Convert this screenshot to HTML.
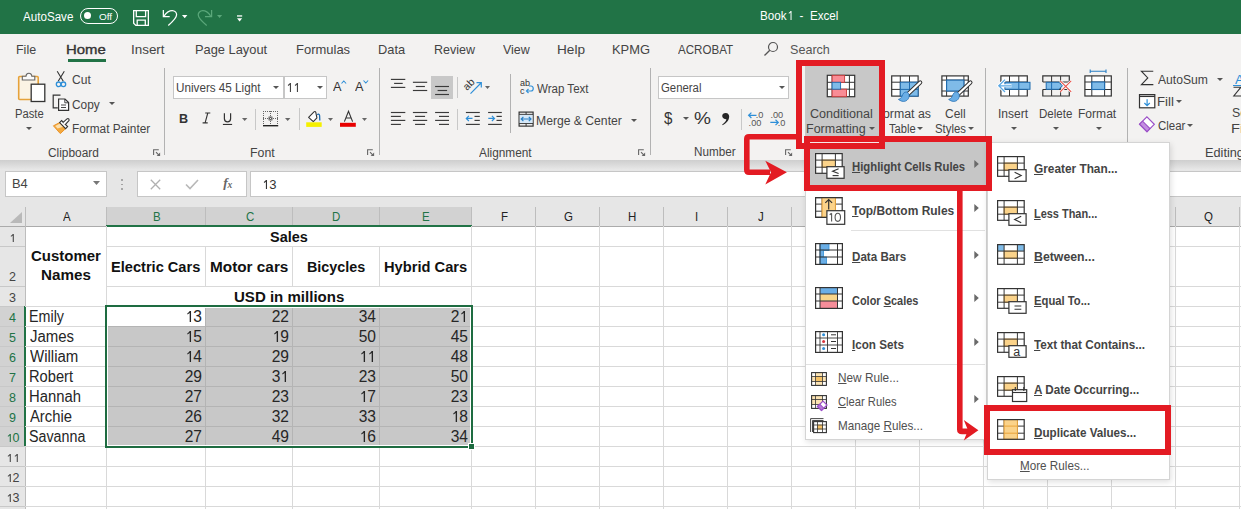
<!DOCTYPE html><html><head><meta charset="utf-8"><style>
html,body{margin:0;padding:0;}
body{width:1241px;height:509px;overflow:hidden;position:relative;background:#fff;font-family:"Liberation Sans",sans-serif;}
.t{position:absolute;white-space:nowrap;line-height:1;}
.r{position:absolute;}
.s{position:absolute;overflow:visible;}
u{text-decoration:underline;text-underline-offset:1px;}
</style></head><body>
<div class="r" style="left:0px;top:0px;width:1241px;height:34px;background:#217346;"></div>
<div class="t" style="left:23.25px;top:11.19px;font-size:12.5px;font-weight:normal;color:#fff;transform-origin:0 0;transform:scaleX(0.9291);">AutoSave</div>
<div class="r" style="left:80px;top:8px;width:38px;height:15.7px;box-sizing:border-box;border:1.3px solid #fff;border-radius:9px;"></div>
<div class="r" style="left:84.4px;top:12.4px;width:7px;height:7px;background:#fff;border-radius:50%;"></div>
<div class="t" style="left:98.74px;top:11.71px;font-size:9.8px;font-weight:normal;color:#fff;transform-origin:0 0;transform:scaleX(1.0201);">Off</div>
<svg class="s" style="left:132px;top:9px;" width="19" height="18" viewBox="0 0 19 18"><path d="M1.65 1.65 H16.35 V16.35 H3.8 L1.65 14.2 Z" fill="none" stroke="#fff" stroke-width="1.3"/><path d="M4.3 1.65 V7.6 H13.6 V1.65" fill="none" stroke="#fff" stroke-width="1.3"/><path d="M5.2 16.35 V11.1 H13.3 V16.35" fill="none" stroke="#fff" stroke-width="1.3"/></svg>
<svg class="s" style="left:162px;top:9px;" width="17" height="18" viewBox="0 0 17 18"><path d="M1.35 0.9 V7.5 H7.7" fill="none" stroke="#fff" stroke-width="1.25"/><path d="M2.2 6.8 C4.5 3.5 7.5 1.6 10.2 1.6 C13 1.6 14.6 3.8 14.6 5.8 C14.6 9 11.5 12 6.3 16.4" fill="none" stroke="#fff" stroke-width="1.25"/></svg>
<svg class="s" style="left:181.8px;top:14.8px;" width="5.4" height="3.2" viewBox="0 0 5.4 3.2"><path d="M0 0 H5.4 L2.7 3.2 Z" fill="#fff"/></svg>
<svg class="s" style="left:196px;top:9px;" width="17" height="18" viewBox="0 0 17 18"><path d="M15.6 0.9 V7.5 H9" fill="none" stroke="#5aa77a" stroke-width="1.25"/><path d="M14.6 6.8 C12.3 3.5 9.5 1.6 6.8 1.6 C4 1.6 2.2 3.8 2.2 5.8 C2.2 9 5.3 12 10.7 16.4" fill="none" stroke="#5aa77a" stroke-width="1.25"/></svg>
<svg class="s" style="left:216.8px;top:15px;" width="5.2" height="3" viewBox="0 0 5.2 3"><path d="M0 0 H5.2 L2.6 3 Z" fill="#5aa77a"/></svg>
<svg class="s" style="left:237px;top:14.5px;" width="5.2" height="7" viewBox="0 0 5.2 7"><rect x="0" y="0.3" width="5.2" height="1.3" fill="#fff"/><path d="M0 3.3 H5.2 L2.6 6.5 Z" fill="#fff"/></svg>
<div class="t" style="left:760.37px;top:9.69px;font-size:12.5px;font-weight:normal;color:#fff;transform-origin:0 0;transform:scaleX(0.9325);">Book<svg width="6.95" height="8.95" viewBox="0 0 556 716" style="vertical-align:baseline;display:inline-block" preserveAspectRatio="none"><path d="M300 0 H386 V716 H300 V130 C260 170 210 200 150 222 V140 C220 110 270 60 300 0 Z" fill="#fff"/></svg>&nbsp; -&nbsp; Excel</div>
<div class="r" style="left:0px;top:34px;width:1241px;height:32px;background:#f3f2f1;"></div>
<div class="t" style="left:15.98px;top:44.25px;font-size:12.8px;font-weight:normal;color:#444;transform-origin:0 0;transform:scaleX(0.9737);">File</div>
<div class="t" style="left:66.48px;top:44.25px;font-size:12.8px;font-weight:normal;color:#333;transform-origin:0 0;transform:scaleX(1.1644);-webkit-text-stroke:0.35px #333;">Home</div>
<div class="t" style="left:131.34px;top:44.25px;font-size:12.8px;font-weight:normal;color:#444;transform-origin:0 0;transform:scaleX(1.0489);">Insert</div>
<div class="t" style="left:194.95px;top:44.25px;font-size:12.8px;font-weight:normal;color:#444;transform-origin:0 0;transform:scaleX(1.0035);">Page Layout</div>
<div class="t" style="left:295.93px;top:44.25px;font-size:12.8px;font-weight:normal;color:#444;transform-origin:0 0;transform:scaleX(1.0145);">Formulas</div>
<div class="t" style="left:377.95px;top:44.25px;font-size:12.8px;font-weight:normal;color:#444;transform-origin:0 0;transform:scaleX(1.0019);">Data</div>
<div class="t" style="left:434.17px;top:44.25px;font-size:12.8px;font-weight:normal;color:#444;transform-origin:0 0;transform:scaleX(0.9768);">Review</div>
<div class="t" style="left:502.95px;top:44.25px;font-size:12.8px;font-weight:normal;color:#444;transform-origin:0 0;transform:scaleX(0.9727);">View</div>
<div class="t" style="left:557.18px;top:44.25px;font-size:12.8px;font-weight:normal;color:#444;transform-origin:0 0;transform:scaleX(1.0626);">Help</div>
<div class="t" style="left:612.04px;top:44.25px;font-size:12.8px;font-weight:normal;color:#444;transform-origin:0 0;transform:scaleX(1.0084);">KPMG</div>
<div class="t" style="left:677.95px;top:44.25px;font-size:12.8px;font-weight:normal;color:#444;transform-origin:0 0;transform:scaleX(0.9043);">ACROBAT</div>
<div class="r" style="left:68px;top:59px;width:38px;height:3px;background:#217346;"></div>
<svg class="s" style="left:763px;top:41px;" width="16" height="16" viewBox="0 0 16 16"><circle cx="10" cy="6" r="4.5" fill="none" stroke="#555" stroke-width="1.2"/><path d="M6.8 9.2 L1.5 14.5" stroke="#555" stroke-width="1.3"/></svg>
<div class="t" style="left:789.71px;top:44.25px;font-size:12.8px;font-weight:normal;color:#555;transform-origin:0 0;transform:scaleX(0.9834);">Search</div>
<div class="r" style="left:0px;top:66px;width:1241px;height:94px;background:#f3f2f1;"></div>
<div class="r" style="left:0px;top:160px;width:1241px;height:8px;background:linear-gradient(#d6d6d6,#e6e6e6);"></div>
<svg class="s" style="left:17px;top:71px;" width="30" height="32" viewBox="0 0 30 32"><rect x="1.7" y="5.5" width="19.5" height="23" rx="1" fill="#fbf3e4" stroke="#e6a23a" stroke-width="1.6"/><path d="M5.3 9 V5.3 H9 C9 1.2 14.8 1.2 14.8 5.3 H17.8 V9 Z" fill="#fafafa" stroke="#666" stroke-width="1.1"/><rect x="14.2" y="13.2" width="13.6" height="17.3" fill="#fff" stroke="#333" stroke-width="1.3"/></svg>
<div class="t" style="left:14.86px;top:107.74px;font-size:12px;font-weight:normal;color:#444;transform-origin:0 0;transform:scaleX(0.9365);">Paste</div>
<svg class="s" style="left:25.7px;top:127.0px;" width="6" height="3" viewBox="0 0 6 3"><path d="M0 0 H6 L3.0 3 Z" fill="#555"/></svg>
<svg class="s" style="left:54px;top:70px;" width="14" height="18" viewBox="0 0 14 18"><path d="M3.2 1.2 L9.3 11.2 M10.3 1.2 L4.2 11.2" stroke="#333" stroke-width="1.1" fill="none"/><circle cx="4.6" cy="14.3" r="2.3" fill="none" stroke="#2e8fd8" stroke-width="1.3"/><circle cx="9.4" cy="14.3" r="2.3" fill="none" stroke="#2e8fd8" stroke-width="1.3"/></svg>
<div class="t" style="left:72.10px;top:74.44px;font-size:12px;font-weight:normal;color:#444;transform-origin:0 0;transform:scaleX(1.0056);">Cut</div>
<svg class="s" style="left:52px;top:94px;" width="18" height="18" viewBox="0 0 18 18"><path d="M8.5 1.2 H1.2 V13.8 H5.8" fill="none" stroke="#333" stroke-width="1.2"/><path d="M6.6 5 H13 L16.6 8.6 V16.4 H6.6 Z" fill="#fff" stroke="#333" stroke-width="1.2"/><path d="M12.8 5 V8.8 H16.6" fill="none" stroke="#333" stroke-width="0.9"/><path d="M9 11 H14 M9 13.5 H14" stroke="#333" stroke-width="0.9"/></svg>
<div class="t" style="left:72.11px;top:98.94px;font-size:12px;font-weight:normal;color:#444;transform-origin:0 0;transform:scaleX(0.9909);">Copy</div>
<svg class="s" style="left:109.0px;top:101.7px;" width="6" height="3" viewBox="0 0 6 3"><path d="M0 0 H6 L3.0 3 Z" fill="#555"/></svg>
<svg class="s" style="left:52px;top:118px;" width="18" height="17" viewBox="0 0 18 17"><path d="M1.4 7.8 L8.2 4.3 L14 10.2 L8.3 15.6 Z" fill="#f4a93e" stroke="#e88d1f" stroke-width="0.9"/><path d="M3.2 8 L8 5.6 L11.2 8.8 L5.5 10.5 Z" fill="#fde0ad"/><path d="M7.6 4.6 L9.6 2.6 L15.6 8.6 L13.6 10.6 Z" fill="#fff" stroke="#333" stroke-width="1.1"/><path d="M10.8 4.6 L15 0.9 Q16 0.2 16.8 1 Q17.5 1.8 16.9 2.7 L13 6.9" fill="#fff" stroke="#333" stroke-width="1.1"/></svg>
<div class="t" style="left:71.71px;top:122.54px;font-size:12px;font-weight:normal;color:#444;transform-origin:0 0;transform:scaleX(0.9853);">Format Painter</div>
<div class="t" style="left:48.11px;top:146.54px;font-size:12px;font-weight:normal;color:#444;transform-origin:0 0;transform:scaleX(0.9900);">Clipboard</div>
<svg class="s" style="left:152.5px;top:148.6px;" width="9" height="9" viewBox="0 0 9 9"><path d="M0.6 5.9 V0.75 H5.8" fill="none" stroke="#666" stroke-width="1.1"/><path d="M3 3.2 L6.4 6.6" stroke="#666" stroke-width="1.1"/><path d="M7.1 3.4 V6.9 H3.6 Z" fill="#666"/></svg>
<div class="r" style="left:164px;top:68px;width:1px;height:87px;background:#b2b2b2;"></div>
<div class="r" style="left:173px;top:76px;width:111px;height:23px;box-sizing:border-box;border:1px solid #c6c6c6;background:#fff;"></div>
<div class="r" style="left:284px;top:76px;width:43px;height:23px;box-sizing:border-box;border:1px solid #c6c6c6;background:#fff;"></div>
<div class="t" style="left:175.52px;top:82.24px;font-size:12px;font-weight:normal;color:#444;transform-origin:0 0;transform:scaleX(0.9738);">Univers 45 Light</div>
<svg class="s" style="left:273.4px;top:86.0px;" width="6" height="3" viewBox="0 0 6 3"><path d="M0 0 H6 L3.0 3 Z" fill="#555"/></svg>
<div class="t" style="left:286px;top:81.3px;font-size:13px;color:#444;"><svg width="7.23" height="9.31" viewBox="0 0 556 716" style="vertical-align:baseline;display:inline-block" preserveAspectRatio="none"><path d="M300 0 H386 V716 H300 V130 C260 170 210 200 150 222 V140 C220 110 270 60 300 0 Z" fill="#444"/></svg><svg width="7.23" height="9.31" viewBox="0 0 556 716" style="vertical-align:baseline;display:inline-block" preserveAspectRatio="none"><path d="M300 0 H386 V716 H300 V130 C260 170 210 200 150 222 V140 C220 110 270 60 300 0 Z" fill="#444"/></svg></div>
<svg class="s" style="left:316.6px;top:86.0px;" width="6" height="3" viewBox="0 0 6 3"><path d="M0 0 H6 L3.0 3 Z" fill="#555"/></svg>
<div class="t" style="left:333.35px;top:80.46px;font-size:13.6px;font-weight:normal;color:#333;transform-origin:0 0;transform:scaleX(0.9333);">A</div>
<svg class="s" style="left:340.8px;top:79.6px;" width="6" height="4" viewBox="0 0 6 4"><path d="M0.5 3.5 L2.8 1 L5.1 3.5" fill="none" stroke="#2e8fd8" stroke-width="1.1"/></svg>
<div class="t" style="left:355.05px;top:80.46px;font-size:13.6px;font-weight:normal;color:#333;transform-origin:0 0;transform:scaleX(0.9333);">A</div>
<svg class="s" style="left:362.5px;top:79.8px;" width="6" height="4" viewBox="0 0 6 4"><path d="M0.5 0.5 L2.8 3 L5.1 0.5" fill="none" stroke="#2e8fd8" stroke-width="1.1"/></svg>
<div class="t" style="left:179.46px;top:111.96px;font-size:13.5px;font-weight:bold;color:#333;transform-origin:0 0;transform:scaleX(0.9333);">B</div>
<svg class="s" style="left:201px;top:112px;" width="10" height="12" viewBox="0 0 10 12"><path d="M4.2 1 H9.3 M1.6 10.9 H6.7 M6.8 1 L4.1 10.9" fill="none" stroke="#333" stroke-width="1.1"/></svg>
<svg class="s" style="left:222px;top:112px;" width="11" height="14" viewBox="0 0 11 14"><path d="M2.4 1.2 V6.8 C2.4 10.9 8.6 10.9 8.6 6.8 V1.2" fill="none" stroke="#333" stroke-width="1.2"/><rect x="0.9" y="11.9" width="9.2" height="1.1" fill="#333"/></svg>
<svg class="s" style="left:241.70000000000002px;top:118.0px;" width="5.4" height="3" viewBox="0 0 5.4 3"><path d="M0 0 H5.4 L2.7 3 Z" fill="#666"/></svg>
<div class="r" style="left:255.3px;top:109px;width:1px;height:21px;background:#c8c8c8;"></div>
<svg class="s" style="left:263px;top:111px;" width="16" height="16" viewBox="0 0 16 16"><rect x="0" y="0" width="1" height="1" fill="#666"/><rect x="0" y="7" width="1" height="1" fill="#666"/><rect x="0" y="0" width="1" height="1" fill="#666"/><rect x="14" y="0" width="1" height="1" fill="#666"/><rect x="7" y="0" width="1" height="1" fill="#666"/><rect x="2" y="0" width="1" height="1" fill="#666"/><rect x="2" y="7" width="1" height="1" fill="#666"/><rect x="0" y="2" width="1" height="1" fill="#666"/><rect x="14" y="2" width="1" height="1" fill="#666"/><rect x="7" y="2" width="1" height="1" fill="#666"/><rect x="4" y="0" width="1" height="1" fill="#666"/><rect x="4" y="7" width="1" height="1" fill="#666"/><rect x="0" y="4" width="1" height="1" fill="#666"/><rect x="14" y="4" width="1" height="1" fill="#666"/><rect x="7" y="4" width="1" height="1" fill="#666"/><rect x="6" y="0" width="1" height="1" fill="#666"/><rect x="6" y="7" width="1" height="1" fill="#666"/><rect x="0" y="6" width="1" height="1" fill="#666"/><rect x="14" y="6" width="1" height="1" fill="#666"/><rect x="7" y="6" width="1" height="1" fill="#666"/><rect x="8" y="0" width="1" height="1" fill="#666"/><rect x="8" y="7" width="1" height="1" fill="#666"/><rect x="0" y="8" width="1" height="1" fill="#666"/><rect x="14" y="8" width="1" height="1" fill="#666"/><rect x="7" y="8" width="1" height="1" fill="#666"/><rect x="10" y="0" width="1" height="1" fill="#666"/><rect x="10" y="7" width="1" height="1" fill="#666"/><rect x="0" y="10" width="1" height="1" fill="#666"/><rect x="14" y="10" width="1" height="1" fill="#666"/><rect x="7" y="10" width="1" height="1" fill="#666"/><rect x="12" y="0" width="1" height="1" fill="#666"/><rect x="12" y="7" width="1" height="1" fill="#666"/><rect x="0" y="12" width="1" height="1" fill="#666"/><rect x="14" y="12" width="1" height="1" fill="#666"/><rect x="7" y="12" width="1" height="1" fill="#666"/><rect x="14" y="0" width="1" height="1" fill="#666"/><rect x="14" y="7" width="1" height="1" fill="#666"/><rect x="0" y="14" width="1" height="1" fill="#666"/><rect x="14" y="14" width="1" height="1" fill="#666"/><rect x="7" y="14" width="1" height="1" fill="#666"/><rect x="0" y="14" width="15.2" height="1.4" fill="#222"/><rect x="6" y="6" width="3" height="3" fill="none" stroke="#444" stroke-width="0.8"/></svg>
<svg class="s" style="left:284.7px;top:118.0px;" width="5.4" height="3" viewBox="0 0 5.4 3"><path d="M0 0 H5.4 L2.7 3 Z" fill="#666"/></svg>
<div class="r" style="left:298.5px;top:108px;width:1px;height:22px;background:#c8c8c8;"></div>
<svg class="s" style="left:0;top:0" width="400" height="140" viewBox="0 0 400 140"><path d="M308.6 117.3 L314 111.9 C314.6 111.3 315.6 111.4 315.8 112.3 L316.9 117.9 L313.3 121.7 Z" fill="#fff" stroke="#333" stroke-width="1.1" stroke-linejoin="round"/><path d="M317.3 114.8 C318.2 113.6 319.4 114 319.6 115.5 L319.8 120.5" fill="none" stroke="#1f6cb0" stroke-width="1.3"/><rect x="306.2" y="122.3" width="15.5" height="4.6" fill="#f5f000"/><path d="M344.4 121.6 L348.5 111.3 L352.6 121.6 M345.9 118 H351.1" fill="none" stroke="#333" stroke-width="1.1"/><rect x="340" y="122.8" width="15.8" height="4" fill="#e80000"/></svg>
<svg class="s" style="left:328.1px;top:117.9px;" width="5" height="3" viewBox="0 0 5 3"><path d="M0 0 H5 L2.5 3 Z" fill="#666"/></svg>
<svg class="s" style="left:362.1px;top:117.9px;" width="5" height="3" viewBox="0 0 5 3"><path d="M0 0 H5 L2.5 3 Z" fill="#666"/></svg>
<div class="t" style="left:250.37px;top:146.54px;font-size:12px;font-weight:normal;color:#444;transform-origin:0 0;transform:scaleX(1.0283);">Font</div>
<svg class="s" style="left:366.8px;top:148.6px;" width="9" height="9" viewBox="0 0 9 9"><path d="M0.6 5.9 V0.75 H5.8" fill="none" stroke="#666" stroke-width="1.1"/><path d="M3 3.2 L6.4 6.6" stroke="#666" stroke-width="1.1"/><path d="M7.1 3.4 V6.9 H3.6 Z" fill="#666"/></svg>
<div class="r" style="left:378.5px;top:68px;width:1px;height:87px;background:#b2b2b2;"></div>
<div class="r" style="left:431.2px;top:76px;width:21.8px;height:22.8px;background:#c8c8c8;"></div>
<svg class="s" style="left:0;top:0" width="1241" height="160" viewBox="0 0 1241 160"><rect x="390.90" y="78.83" width="14.40" height="1.15" fill="#3a3a3a"/><rect x="394.10" y="82.83" width="8.60" height="1.15" fill="#3a3a3a"/><rect x="390.90" y="86.83" width="14.40" height="1.15" fill="#3a3a3a"/><rect x="412.90" y="81.72" width="14.30" height="1.15" fill="#3a3a3a"/><rect x="415.80" y="85.92" width="9.10" height="1.15" fill="#3a3a3a"/><rect x="412.90" y="89.92" width="14.30" height="1.15" fill="#3a3a3a"/><rect x="435.10" y="85.92" width="13.90" height="1.15" fill="#3a3a3a"/><rect x="437.60" y="89.92" width="9.50" height="1.15" fill="#3a3a3a"/><rect x="435.10" y="93.92" width="13.90" height="1.15" fill="#3a3a3a"/><rect x="390.90" y="111.92" width="14.40" height="1.15" fill="#3a3a3a"/><rect x="390.90" y="115.83" width="10.00" height="1.15" fill="#3a3a3a"/><rect x="390.90" y="119.83" width="14.40" height="1.15" fill="#3a3a3a"/><rect x="390.90" y="123.83" width="10.00" height="1.15" fill="#3a3a3a"/><rect x="412.90" y="111.92" width="14.30" height="1.15" fill="#3a3a3a"/><rect x="415.05" y="115.83" width="10.00" height="1.15" fill="#3a3a3a"/><rect x="412.90" y="119.83" width="14.30" height="1.15" fill="#3a3a3a"/><rect x="415.05" y="123.83" width="10.00" height="1.15" fill="#3a3a3a"/><rect x="435.10" y="111.92" width="13.90" height="1.15" fill="#3a3a3a"/><rect x="439.00" y="115.83" width="10.00" height="1.15" fill="#3a3a3a"/><rect x="435.10" y="119.83" width="13.90" height="1.15" fill="#3a3a3a"/><rect x="439.00" y="123.83" width="10.00" height="1.15" fill="#3a3a3a"/><rect x="465.90" y="111.92" width="13.90" height="1.15" fill="#3a3a3a"/><rect x="474.50" y="115.83" width="5.30" height="1.15" fill="#3a3a3a"/><rect x="474.50" y="119.83" width="5.30" height="1.15" fill="#3a3a3a"/><rect x="465.90" y="123.83" width="13.90" height="1.15" fill="#3a3a3a"/><rect x="488.10" y="111.92" width="13.70" height="1.15" fill="#3a3a3a"/><rect x="496.50" y="115.83" width="5.30" height="1.15" fill="#3a3a3a"/><rect x="496.50" y="119.83" width="5.30" height="1.15" fill="#3a3a3a"/><rect x="488.10" y="123.83" width="13.70" height="1.15" fill="#3a3a3a"/><path d="M472.5 118.4 H466.3 M468.9 115.8 L466.3 118.4 L468.9 121" fill="none" stroke="#2e8fd8" stroke-width="1.2"/><path d="M488.3 118.4 H494.5 M491.9 115.8 L494.5 118.4 L491.9 121" fill="none" stroke="#2e8fd8" stroke-width="1.2"/></svg>
<div class="r" style="left:457px;top:77px;width:1px;height:21px;background:#c8c8c8;"></div>
<div class="r" style="left:457px;top:109px;width:1px;height:21px;background:#c8c8c8;"></div>
<svg class="s" style="left:462px;top:77px;" width="22" height="18" viewBox="0 0 22 18"><text x="0" y="0" font-size="10.5" font-family="Liberation Sans" fill="#333" transform="translate(5 14) rotate(-45)">ab</text><path d="M8.5 16.7 L19 6 M14.5 5.6 H19.3 V10.4" fill="none" stroke="#2e8fd8" stroke-width="1.2"/></svg>
<svg class="s" style="left:484.9px;top:85.9px;" width="5" height="3" viewBox="0 0 5 3"><path d="M0 0 H5 L2.5 3 Z" fill="#666"/></svg>
<div class="r" style="left:510px;top:74px;width:1px;height:59px;background:#b2b2b2;"></div>
<svg class="s" style="left:519px;top:78px;" width="17" height="18" viewBox="0 0 17 18"><text x="1" y="8" font-size="9" font-family="Liberation Sans" fill="#333">ab</text><text x="1" y="16" font-size="9" font-family="Liberation Sans" fill="#333">c</text><path d="M8 13 H12 C15 13 15 8 12 8 H10" fill="none" stroke="#2e8fd8" stroke-width="1.2"/><path d="M9.5 11 L7.5 13 L9.5 15" fill="none" stroke="#2e8fd8" stroke-width="1.2"/></svg>
<div class="t" style="left:537.25px;top:82.54px;font-size:12px;font-weight:normal;color:#444;transform-origin:0 0;transform:scaleX(0.9616);">Wrap Text</div>
<svg class="s" style="left:517.5px;top:110.5px;" width="16" height="16" viewBox="0 0 16 16"><rect x="1.1" y="1.1" width="14" height="14" fill="#fff" stroke="#333" stroke-width="1.2"/><rect x="1.7" y="3.6" width="12.8" height="8.8" fill="#d5e8f8"/><path d="M1.1 3.3 H15.1 M1.1 12.6 H15.1 M8.1 1.1 V3.3 M8.1 12.6 V15.1" stroke="#333" stroke-width="1"/><path d="M3.2 8 H13 M5.4 5.8 L3.2 8 L5.4 10.2 M10.8 5.8 L13 8 L10.8 10.2" fill="none" stroke="#2a7fc4" stroke-width="1.2"/></svg>
<div class="t" style="left:536.29px;top:114.84px;font-size:12px;font-weight:normal;color:#444;transform-origin:0 0;transform:scaleX(1.0132);">Merge &amp; Center</div>
<svg class="s" style="left:631.3px;top:118.5px;" width="6" height="3" viewBox="0 0 6 3"><path d="M0 0 H6 L3.0 3 Z" fill="#555"/></svg>
<div class="t" style="left:479.25px;top:146.54px;font-size:12px;font-weight:normal;color:#444;transform-origin:0 0;transform:scaleX(0.9859);">Alignment</div>
<svg class="s" style="left:637.8px;top:148.6px;" width="9" height="9" viewBox="0 0 9 9"><path d="M0.6 5.9 V0.75 H5.8" fill="none" stroke="#666" stroke-width="1.1"/><path d="M3 3.2 L6.4 6.6" stroke="#666" stroke-width="1.1"/><path d="M7.1 3.4 V6.9 H3.6 Z" fill="#666"/></svg>
<div class="r" style="left:649.5px;top:68px;width:1px;height:87px;background:#b2b2b2;"></div>
<div class="r" style="left:658px;top:76px;width:131px;height:23px;box-sizing:border-box;border:1px solid #c6c6c6;background:#fff;"></div>
<div class="t" style="left:661.13px;top:82.34px;font-size:12px;font-weight:normal;color:#444;transform-origin:0 0;transform:scaleX(0.9467);">General</div>
<svg class="s" style="left:778.5px;top:86.0px;" width="6" height="3" viewBox="0 0 6 3"><path d="M0 0 H6 L3.0 3 Z" fill="#555"/></svg>
<div class="t" style="left:663.86px;top:111.18px;font-size:16px;font-weight:normal;color:#333;transform-origin:0 0;transform:scaleX(0.9412);">$</div>
<svg class="s" style="left:682.6px;top:117.0px;" width="6" height="3" viewBox="0 0 6 3"><path d="M0 0 H6 L3.0 3 Z" fill="#555"/></svg>
<div class="t" style="left:694.35px;top:111.18px;font-size:16px;font-weight:normal;color:#333;transform-origin:0 0;transform:scaleX(1.1908);">%</div>
<svg class="s" style="left:721px;top:112px;" width="9" height="14" viewBox="0 0 9 14"><path d="M4.6 1 C7.2 1 8.3 3 8.2 4.8 C8 8.5 5 11.8 1.6 13.2 L1.2 12.4 C3.5 11 5 9.5 5.4 7.3 C3 7.3 1.2 6 1.2 4.1 C1.2 2.2 2.7 1 4.6 1 Z" fill="#262626"/></svg>
<div class="r" style="left:740.5px;top:109px;width:1px;height:21px;background:#c8c8c8;"></div>
<svg class="s" style="left:0;top:0" width="800" height="160" viewBox="0 0 800 160"><text x="755.8" y="117.6" font-size="9.2" font-family="Liberation Sans" fill="#555">.0</text><text x="748.6" y="125.8" font-size="9.2" font-family="Liberation Sans" fill="#555">.00</text><path d="M756.5 115.3 H748.6 M751.4 112.6 L748.6 115.3 L751.4 118" fill="none" stroke="#2e8fd8" stroke-width="1.2"/><text x="770.4" y="117.6" font-size="9.2" font-family="Liberation Sans" fill="#555">.00</text><text x="777.7" y="125.8" font-size="9.2" font-family="Liberation Sans" fill="#555">.0</text><path d="M770.3 122.4 H778.3 M775.5 119.7 L778.3 122.4 L775.5 125.1" fill="none" stroke="#2e8fd8" stroke-width="1.2"/></svg>
<div class="t" style="left:693.63px;top:146.34px;font-size:12px;font-weight:normal;color:#444;transform-origin:0 0;transform:scaleX(0.9735);">Number</div>
<svg class="s" style="left:784.6px;top:148.6px;" width="9" height="9" viewBox="0 0 9 9"><path d="M0.6 5.9 V0.75 H5.8" fill="none" stroke="#666" stroke-width="1.1"/><path d="M3 3.2 L6.4 6.6" stroke="#666" stroke-width="1.1"/><path d="M7.1 3.4 V6.9 H3.6 Z" fill="#666"/></svg>
<div class="r" style="left:805px;top:66px;width:74px;height:70px;background:#c8c8c8;"></div>
<svg class="s" style="left:826px;top:74px;" width="30" height="24" viewBox="0 0 30 24"><rect x="1.3" y="1.3" width="27.4" height="21.4" fill="#fff" stroke="#333" stroke-width="1.2"/><path d="M6.1 1.3 V22.7 M23.4 1.3 V22.7 M1.3 8.3 H28.7 M1.3 15.2 H28.7" stroke="#333" stroke-width="1"/><rect x="6.1" y="1.3" width="12.5" height="7" fill="#f98c95" stroke="#c93a3a" stroke-width="0.9"/><rect x="6.1" y="15.2" width="14.4" height="7.5" fill="#f98c95" stroke="#c93a3a" stroke-width="0.9"/><rect x="6.1" y="8.3" width="8.5" height="6.9" fill="#7fbbe8" stroke="#1f6cb0" stroke-width="0.9"/></svg>
<div class="t" style="left:809.77px;top:107.74px;font-size:12px;font-weight:normal;color:#444;transform-origin:0 0;transform:scaleX(1.0469);">Conditional</div>
<div class="t" style="left:806.46px;top:123.04px;font-size:12px;font-weight:normal;color:#444;transform-origin:0 0;transform:scaleX(1.0414);">Formatting</div>
<svg class="s" style="left:868.5px;top:127.0px;" width="6" height="3" viewBox="0 0 6 3"><path d="M0 0 H6 L3.0 3 Z" fill="#555"/></svg>
<svg class="s" style="left:0;top:0" width="1000" height="110" viewBox="0 0 1000 110"><rect x="891.7" y="75.9" width="26.4" height="20.2" fill="#fff" stroke="#333" stroke-width="1.2"/><path d="M891.7 82.2 H918.1 M891.7 89.4 H918.1 M900.3 75.9 V96.1 M909.5 75.9 V96.1" stroke="#333" stroke-width="1"/><rect x="900.3" y="82.2" width="17.8" height="13.9" fill="#7fbbe8" stroke="#1f6cb0" stroke-width="1"/><path d="M900.3 89.4 H918.1 M909.5 82.2 V96.1" stroke="#1f6cb0" stroke-width="1"/><path d="M920.2 82.5 L907.2 94.8" stroke="#333" stroke-width="4.2" stroke-linecap="round"/><path d="M920.2 82.5 L907.2 94.8" stroke="#fff" stroke-width="2.2" stroke-linecap="round"/><path d="M907.6 92.5 C910.1 94.3 909.6 99.3 905.6 101.1 C903.1 102.1 900.1 100.8 898.4 99.4 C901.1 98.8 901.9 96.8 902.7 94.6 C903.6 92.3 905.9 91.3 907.6 92.5 Z" fill="#6aaee6" stroke="#1f6cb0" stroke-width="0.7"/><rect x="941.9" y="75.9" width="26.4" height="20.2" fill="#fff" stroke="#333" stroke-width="1.2"/><path d="M941.9 80.1 H968.3 M941.9 91 H968.3 M946.6 75.9 V96.1 M963.9 75.9 V96.1" stroke="#333" stroke-width="1"/><rect x="946.6" y="80.1" width="17.3" height="10.9" fill="#7fbbe8" stroke="#1f6cb0" stroke-width="1.1"/><path d="M970.4 82.5 L957.4 94.8" stroke="#333" stroke-width="4.2" stroke-linecap="round"/><path d="M970.4 82.5 L957.4 94.8" stroke="#fff" stroke-width="2.2" stroke-linecap="round"/><path d="M957.8 92.5 C960.3 94.3 959.8 99.3 955.8 101.1 C953.3 102.1 950.3 100.8 948.5999999999999 99.4 C951.3 98.8 952.0999999999999 96.8 952.9 94.6 C953.8 92.3 956.0999999999999 91.3 957.8 92.5 Z" fill="#6aaee6" stroke="#1f6cb0" stroke-width="0.7"/></svg>
<div class="t" style="left:883.49px;top:107.74px;font-size:12px;font-weight:normal;color:#444;transform-origin:0 0;transform:scaleX(1.0273);">ormat as</div>
<div class="t" style="left:889.07px;top:123.04px;font-size:12px;font-weight:normal;color:#444;transform-origin:0 0;transform:scaleX(0.9283);">Table</div>
<svg class="s" style="left:917.2px;top:127.0px;" width="6" height="3" viewBox="0 0 6 3"><path d="M0 0 H6 L3.0 3 Z" fill="#555"/></svg>
<div class="t" style="left:944.60px;top:107.74px;font-size:12px;font-weight:normal;color:#444;transform-origin:0 0;transform:scaleX(0.9974);">Cell</div>
<div class="t" style="left:935.48px;top:123.04px;font-size:12px;font-weight:normal;color:#444;transform-origin:0 0;transform:scaleX(0.9464);">Styles</div>
<svg class="s" style="left:968.0px;top:127.0px;" width="6" height="3" viewBox="0 0 6 3"><path d="M0 0 H6 L3.0 3 Z" fill="#555"/></svg>
<div class="r" style="left:984.5px;top:68px;width:1px;height:87px;background:#b2b2b2;"></div>
<svg class="s" style="left:0;top:0" width="1241" height="110" viewBox="0 0 1241 110"><path d="M1000.9 82 V75.9 H1027.3 V96 H1000.9 V89.5" fill="#fff" stroke="#333" stroke-width="1.2"/><rect x="1000.9" y="82" width="26.4" height="7.5" fill="#fff"/><path d="M1000.9 82 H1027.3 M1000.9 89.5 H1027.3 M1009.5 75.9 V96 M1018.8 75.9 V96" stroke="#333" stroke-width="1"/><rect x="1004.9" y="82.3" width="25.1" height="7" fill="#7fbbe8" stroke="#1f6cb0" stroke-width="1"/><path d="M1018.8 82.3 V89.3" stroke="#1f6cb0" stroke-width="1"/><path d="M1011.5 85.8 H999 M1005 79.6 L998.8 85.8 L1005 92" fill="none" stroke="#fff" stroke-width="3"/><path d="M1011.5 85.8 H999 M1005 79.6 L998.8 85.8 L1005 92" fill="none" stroke="#5aa8e4" stroke-width="1.3"/><path d="M1042.8 82 V75.9 H1069.3 V82 M1069.3 89.5 V96 H1042.8 V89.5" fill="none" stroke="#333" stroke-width="1.2"/><path d="M1042.8 82 H1069.3 M1042.8 89.5 H1069.3 M1051.6 75.9 V96 M1060.6 75.9 V96" stroke="#333" stroke-width="1"/><path d="M1046.2 82.3 H1059 L1062.4 85.8 L1059 89.3 H1046.2 Z" fill="#7fbbe8" stroke="#1f6cb0" stroke-width="1"/><path d="M1051.6 82.3 V89.3" stroke="#1f6cb0" stroke-width="1"/><path d="M1060.2 80.8 L1071.2 91.8 M1071.2 80.8 L1060.2 91.8" stroke="#fff" stroke-width="2.4"/><path d="M1060.2 80.8 L1071.2 91.8 M1071.2 80.8 L1060.2 91.8" stroke="#e8534a" stroke-width="1.1"/><rect x="1084.9" y="75.9" width="26.4" height="20.1" fill="#fff" stroke="#333" stroke-width="1.2"/><path d="M1084.9 82 H1111.3 M1084.9 89.5 H1111.3 M1091.8 75.9 V96 M1104.6 75.9 V96" stroke="#333" stroke-width="1"/><rect x="1091.8" y="82" width="12.8" height="7.5" fill="#7fbbe8" stroke="#1f6cb0" stroke-width="1.1"/><path d="M1090.2 71.2 H1106 M1090.2 69.4 V73 M1106 69.4 V73" stroke="#2a7fc4" stroke-width="1.1"/></svg>
<div class="t" style="left:997.90px;top:107.84px;font-size:12px;font-weight:normal;color:#444;transform-origin:0 0;transform:scaleX(1.0017);">Insert</div>
<div class="t" style="left:1038.74px;top:107.84px;font-size:12px;font-weight:normal;color:#444;transform-origin:0 0;transform:scaleX(0.9623);">Delete</div>
<div class="t" style="left:1078.49px;top:107.84px;font-size:12px;font-weight:normal;color:#444;transform-origin:0 0;transform:scaleX(1.0054);">Format</div>
<svg class="s" style="left:1010.5px;top:127.0px;" width="6" height="3" viewBox="0 0 6 3"><path d="M0 0 H6 L3.0 3 Z" fill="#555"/></svg>
<svg class="s" style="left:1052.5px;top:127.0px;" width="6" height="3" viewBox="0 0 6 3"><path d="M0 0 H6 L3.0 3 Z" fill="#555"/></svg>
<svg class="s" style="left:1095.5px;top:127.0px;" width="6" height="3" viewBox="0 0 6 3"><path d="M0 0 H6 L3.0 3 Z" fill="#555"/></svg>
<div class="t" style="left:1020.39px;top:146.54px;font-size:12px;font-weight:normal;color:#444;transform-origin:0 0;transform:scaleX(1.0156);">Cells</div>
<div class="r" style="left:1127px;top:68px;width:1px;height:87px;background:#b2b2b2;"></div>
<svg class="s" style="left:1140px;top:70px;" width="15" height="16" viewBox="0 0 15 16"><path d="M12.7 1.8 V1.2 H1.4 L7.8 7.9 L1.4 14.6 H12.8 V14" fill="none" stroke="#333" stroke-width="1.1"/></svg>
<div class="t" style="left:1158.25px;top:73.64px;font-size:12px;font-weight:normal;color:#444;transform-origin:0 0;transform:scaleX(1.0124);">AutoSum</div>
<svg class="s" style="left:1217.2px;top:77.5px;" width="6" height="3" viewBox="0 0 6 3"><path d="M0 0 H6 L3.0 3 Z" fill="#555"/></svg>
<svg class="s" style="left:1138px;top:93px;" width="18" height="16" viewBox="0 0 18 16"><rect x="1.5" y="1.6" width="15.3" height="13.2" fill="#fff" stroke="#333" stroke-width="1.2"/><path d="M1.5 3.4 H16.8" stroke="#333" stroke-width="1.3"/><path d="M9.1 6.3 V12.6 M6.4 10 L9.1 12.7 L11.8 10" fill="none" stroke="#2e8fd8" stroke-width="1.2"/></svg>
<div class="t" style="left:1157.20px;top:95.94px;font-size:12px;font-weight:normal;color:#444;transform-origin:0 0;transform:scaleX(1.0963);">Fill</div>
<svg class="s" style="left:1175.9px;top:99.8px;" width="6" height="3" viewBox="0 0 6 3"><path d="M0 0 H6 L3.0 3 Z" fill="#555"/></svg>
<svg class="s" style="left:1138px;top:115px;" width="18" height="18" viewBox="0 0 18 18"><path d="M1.6 9.2 L8.9 1.9 L16.3 9.3 L9 16.6 Z" fill="#fff" stroke="#9b4fc8" stroke-width="1.2"/><path d="M1.6 9.2 L4.6 6.2 L11.9 13.6 L9 16.6 Z" fill="#c38fe0" stroke="#9b4fc8" stroke-width="1.1"/></svg>
<div class="t" style="left:1157.73px;top:119.64px;font-size:12px;font-weight:normal;color:#444;transform-origin:0 0;transform:scaleX(0.9570);">Clear</div>
<svg class="s" style="left:1187.2px;top:123.5px;" width="6" height="3" viewBox="0 0 6 3"><path d="M0 0 H6 L3.0 3 Z" fill="#555"/></svg>
<div class="t" style="left:1231.94px;top:107.24px;font-size:12px;font-weight:normal;color:#444;transform-origin:0 0;transform:scaleX(1.0256);">So</div>
<div class="t" style="left:1231.28px;top:122.64px;font-size:12px;font-weight:normal;color:#444;transform-origin:0 0;transform:scaleX(1.2195);">Fi</div>
<div class="t" style="left:1235.15px;top:73.25px;font-size:13px;font-weight:normal;color:#2e8fd8;transform-origin:0 0;transform:scaleX(1.0465);">A</div>
<svg class="s" style="left:1232px;top:86px;" width="12" height="12" viewBox="0 0 12 12"><path d="M1.5 1.2 H9 L1.8 10 H9.5" fill="none" stroke="#333" stroke-width="1.1"/><path d="M1 -0.5 H10" stroke="#2e8fd8" stroke-width="1"/></svg>
<div class="t" style="left:1204.94px;top:146.84px;font-size:12px;font-weight:normal;color:#444;transform-origin:0 0;transform:scaleX(1.0602);">Editing</div>
<div class="r" style="left:0px;top:160px;width:1241px;height:47px;background:#e6e6e6;"></div>
<div class="r" style="left:0px;top:160px;width:1241px;height:10px;background:linear-gradient(#cecece,#e8e8e8);"></div>
<div class="r" style="left:5px;top:171px;width:102px;height:26px;box-sizing:border-box;border:1px solid #c6c6c6;background:#fff;"></div>
<div class="t" style="left:11.57px;top:178.39px;font-size:12.5px;font-weight:normal;color:#444;transform-origin:0 0;transform:scaleX(1.0323);">B4</div>
<svg class="s" style="left:93px;top:180.5px;" width="7" height="4" viewBox="0 0 7 4"><path d="M0 0 H7 L3.5 4 Z" fill="#777"/></svg>
<div class="r" style="left:121px;top:179px;width:1.6px;height:1.6px;background:#9a9a9a;border-radius:50%;"></div>
<div class="r" style="left:121px;top:183.5px;width:1.6px;height:1.6px;background:#9a9a9a;border-radius:50%;"></div>
<div class="r" style="left:121px;top:188px;width:1.6px;height:1.6px;background:#9a9a9a;border-radius:50%;"></div>
<div class="r" style="left:137px;top:171px;width:110px;height:26px;box-sizing:border-box;border:1px solid #c6c6c6;background:#fff;"></div>
<svg class="s" style="left:150px;top:179px;" width="11" height="11" viewBox="0 0 11 11"><path d="M0.8 0.8 L10.2 10.2 M10.2 0.8 L0.8 10.2" stroke="#b0b0b0" stroke-width="1.3"/></svg>
<svg class="s" style="left:185px;top:179px;" width="14" height="11" viewBox="0 0 14 11"><path d="M1 5.5 L5 9.5 L13 1" fill="none" stroke="#b8b8b8" stroke-width="1.6"/></svg>
<svg class="s" style="left:221px;top:176px;" width="16" height="16" viewBox="0 0 16 16"><text x="2.2" y="11.2" font-size="13.5" font-family="Liberation Serif" font-style="italic" font-weight="bold" fill="#666">f</text><text x="6.6" y="11.6" font-size="9.5" font-family="Liberation Serif" font-style="italic" font-weight="bold" fill="#666">x</text></svg>
<div class="r" style="left:250px;top:171px;width:1000px;height:26px;box-sizing:border-box;border:1px solid #c6c6c6;background:#fff;"></div>
<div class="t" style="left:262px;top:178.1px;font-size:13px;color:#333;"><svg width="7.23" height="9.31" viewBox="0 0 556 716" style="vertical-align:baseline;display:inline-block" preserveAspectRatio="none"><path d="M300 0 H386 V716 H300 V130 C260 170 210 200 150 222 V140 C220 110 270 60 300 0 Z" fill="#333"/></svg>3</div>
<div class="r" style="left:0px;top:207px;width:1241px;height:19px;background:#e6e6e6;"></div>
<div class="r" style="left:106px;top:207px;width:366px;height:19px;background:#d2d2d2;"></div>
<div class="r" style="left:0px;top:226px;width:25px;height:290px;background:#e6e6e6;"></div>
<div class="r" style="left:0px;top:306px;width:25px;height:140px;background:#d2d2d2;"></div>
<svg class="s" style="left:10px;top:212px;" width="12" height="11" viewBox="0 0 12 11"><path d="M12 0 V11 H0 Z" fill="#b9b9b9"/></svg>
<div class="r" style="left:25px;top:207px;width:1px;height:19px;background:#bdbdbd;"></div>
<div class="r" style="left:106px;top:207px;width:1px;height:19px;background:#bdbdbd;"></div>
<div class="r" style="left:205px;top:207px;width:1px;height:19px;background:#bdbdbd;"></div>
<div class="r" style="left:292px;top:207px;width:1px;height:19px;background:#bdbdbd;"></div>
<div class="r" style="left:379px;top:207px;width:1px;height:19px;background:#bdbdbd;"></div>
<div class="r" style="left:471px;top:207px;width:1px;height:19px;background:#bdbdbd;"></div>
<div class="r" style="left:535px;top:207px;width:1px;height:19px;background:#bdbdbd;"></div>
<div class="r" style="left:599px;top:207px;width:1px;height:19px;background:#bdbdbd;"></div>
<div class="r" style="left:663px;top:207px;width:1px;height:19px;background:#bdbdbd;"></div>
<div class="r" style="left:727px;top:207px;width:1px;height:19px;background:#bdbdbd;"></div>
<div class="r" style="left:791px;top:207px;width:1px;height:19px;background:#bdbdbd;"></div>
<div class="r" style="left:855px;top:207px;width:1px;height:19px;background:#bdbdbd;"></div>
<div class="r" style="left:919px;top:207px;width:1px;height:19px;background:#bdbdbd;"></div>
<div class="r" style="left:983px;top:207px;width:1px;height:19px;background:#bdbdbd;"></div>
<div class="r" style="left:1047px;top:207px;width:1px;height:19px;background:#bdbdbd;"></div>
<div class="r" style="left:1111px;top:207px;width:1px;height:19px;background:#bdbdbd;"></div>
<div class="r" style="left:1175px;top:207px;width:1px;height:19px;background:#bdbdbd;"></div>
<div class="r" style="left:1239px;top:207px;width:1px;height:19px;background:#bdbdbd;"></div>
<div class="r" style="left:0px;top:226px;width:1241px;height:1px;background:#ababab;"></div>
<div class="r" style="left:106px;top:225px;width:366px;height:2px;background:#217346;"></div>
<div class="t" style="left:62.96px;top:211.19px;font-size:12.5px;font-weight:normal;color:#222;transform-origin:0 0;transform:scaleX(0.9200);">A</div>
<div class="t" style="left:152.80px;top:211.19px;font-size:12.5px;font-weight:normal;color:#217346;transform-origin:0 0;transform:scaleX(0.9200);">B</div>
<div class="t" style="left:245.57px;top:211.19px;font-size:12.5px;font-weight:normal;color:#217346;transform-origin:0 0;transform:scaleX(0.9200);">C</div>
<div class="t" style="left:332.45px;top:211.19px;font-size:12.5px;font-weight:normal;color:#217346;transform-origin:0 0;transform:scaleX(0.9200);">D</div>
<div class="t" style="left:422.25px;top:211.19px;font-size:12.5px;font-weight:normal;color:#217346;transform-origin:0 0;transform:scaleX(0.9200);">E</div>
<div class="t" style="left:500.55px;top:211.19px;font-size:12.5px;font-weight:normal;color:#222;transform-origin:0 0;transform:scaleX(0.9200);">F</div>
<div class="t" style="left:563.98px;top:211.19px;font-size:12.5px;font-weight:normal;color:#222;transform-origin:0 0;transform:scaleX(0.9200);">G</div>
<div class="t" style="left:628.16px;top:211.19px;font-size:12.5px;font-weight:normal;color:#222;transform-origin:0 0;transform:scaleX(0.9200);">H</div>
<div class="t" style="left:694.71px;top:211.19px;font-size:12.5px;font-weight:normal;color:#222;transform-origin:0 0;transform:scaleX(0.9200);">I</div>
<div class="t" style="left:757.75px;top:211.19px;font-size:12.5px;font-weight:normal;color:#222;transform-origin:0 0;transform:scaleX(0.9200);">J</div>
<div class="t" style="left:820.07px;top:211.19px;font-size:12.5px;font-weight:normal;color:#222;transform-origin:0 0;transform:scaleX(0.9200);">K</div>
<div class="t" style="left:884.83px;top:211.19px;font-size:12.5px;font-weight:normal;color:#222;transform-origin:0 0;transform:scaleX(0.9200);">L</div>
<div class="t" style="left:947.52px;top:211.19px;font-size:12.5px;font-weight:normal;color:#222;transform-origin:0 0;transform:scaleX(0.9200);">M</div>
<div class="t" style="left:1012.16px;top:211.19px;font-size:12.5px;font-weight:normal;color:#222;transform-origin:0 0;transform:scaleX(0.9200);">N</div>
<div class="t" style="left:1075.82px;top:211.19px;font-size:12.5px;font-weight:normal;color:#222;transform-origin:0 0;transform:scaleX(0.9200);">O</div>
<div class="t" style="left:1140.30px;top:211.19px;font-size:12.5px;font-weight:normal;color:#222;transform-origin:0 0;transform:scaleX(0.9200);">P</div>
<div class="t" style="left:1203.82px;top:211.19px;font-size:12.5px;font-weight:normal;color:#222;transform-origin:0 0;transform:scaleX(0.9200);">Q</div>
<div class="r" style="left:0px;top:246px;width:25px;height:1px;background:#c8c8c8;"></div>
<div class="r" style="left:0px;top:286px;width:25px;height:1px;background:#c8c8c8;"></div>
<div class="r" style="left:0px;top:306px;width:25px;height:1px;background:#c8c8c8;"></div>
<div class="r" style="left:0px;top:326px;width:25px;height:1px;background:#c8c8c8;"></div>
<div class="r" style="left:0px;top:346px;width:25px;height:1px;background:#c8c8c8;"></div>
<div class="r" style="left:0px;top:366px;width:25px;height:1px;background:#c8c8c8;"></div>
<div class="r" style="left:0px;top:386px;width:25px;height:1px;background:#c8c8c8;"></div>
<div class="r" style="left:0px;top:406px;width:25px;height:1px;background:#c8c8c8;"></div>
<div class="r" style="left:0px;top:426px;width:25px;height:1px;background:#c8c8c8;"></div>
<div class="r" style="left:0px;top:446px;width:25px;height:1px;background:#c8c8c8;"></div>
<div class="r" style="left:0px;top:466px;width:25px;height:1px;background:#c8c8c8;"></div>
<div class="r" style="left:0px;top:486px;width:25px;height:1px;background:#c8c8c8;"></div>
<div class="r" style="left:0px;top:506px;width:25px;height:1px;background:#c8c8c8;"></div>
<div class="r" style="left:0px;top:526px;width:25px;height:1px;background:#c8c8c8;"></div>
<div class="r" style="left:25px;top:226px;width:1px;height:290px;background:#bdbdbd;"></div>
<div class="r" style="left:23.5px;top:306px;width:2px;height:140px;background:#217346;"></div>
<div class="t" style="left:0px;width:25px;text-align:center;top:232.49px;font-size:12.5px;color:#444;"><svg width="6.95" height="8.95" viewBox="0 0 556 716" style="vertical-align:baseline;display:inline-block" preserveAspectRatio="none"><path d="M300 0 H386 V716 H300 V130 C260 170 210 200 150 222 V140 C220 110 270 60 300 0 Z" fill="#444"/></svg></div>
<div class="t" style="left:0px;width:25px;text-align:center;top:271.49px;font-size:12.5px;color:#444;">2</div>
<div class="t" style="left:0px;width:25px;text-align:center;top:292.49px;font-size:12.5px;color:#444;">3</div>
<div class="t" style="left:0px;width:25px;text-align:center;top:312.49px;font-size:12.5px;color:#217346;">4</div>
<div class="t" style="left:0px;width:25px;text-align:center;top:332.49px;font-size:12.5px;color:#217346;">5</div>
<div class="t" style="left:0px;width:25px;text-align:center;top:352.49px;font-size:12.5px;color:#217346;">6</div>
<div class="t" style="left:0px;width:25px;text-align:center;top:372.49px;font-size:12.5px;color:#217346;">7</div>
<div class="t" style="left:0px;width:25px;text-align:center;top:392.49px;font-size:12.5px;color:#217346;">8</div>
<div class="t" style="left:0px;width:25px;text-align:center;top:412.49px;font-size:12.5px;color:#217346;">9</div>
<div class="t" style="left:0px;width:25px;text-align:center;top:432.49px;font-size:12.5px;color:#217346;"><svg width="6.95" height="8.95" viewBox="0 0 556 716" style="vertical-align:baseline;display:inline-block" preserveAspectRatio="none"><path d="M300 0 H386 V716 H300 V130 C260 170 210 200 150 222 V140 C220 110 270 60 300 0 Z" fill="#217346"/></svg>0</div>
<div class="t" style="left:0px;width:25px;text-align:center;top:452.49px;font-size:12.5px;color:#444;"><svg width="6.95" height="8.95" viewBox="0 0 556 716" style="vertical-align:baseline;display:inline-block" preserveAspectRatio="none"><path d="M300 0 H386 V716 H300 V130 C260 170 210 200 150 222 V140 C220 110 270 60 300 0 Z" fill="#444"/></svg><svg width="6.95" height="8.95" viewBox="0 0 556 716" style="vertical-align:baseline;display:inline-block" preserveAspectRatio="none"><path d="M300 0 H386 V716 H300 V130 C260 170 210 200 150 222 V140 C220 110 270 60 300 0 Z" fill="#444"/></svg></div>
<div class="t" style="left:0px;width:25px;text-align:center;top:472.49px;font-size:12.5px;color:#444;"><svg width="6.95" height="8.95" viewBox="0 0 556 716" style="vertical-align:baseline;display:inline-block" preserveAspectRatio="none"><path d="M300 0 H386 V716 H300 V130 C260 170 210 200 150 222 V140 C220 110 270 60 300 0 Z" fill="#444"/></svg>2</div>
<div class="t" style="left:0px;width:25px;text-align:center;top:492.49px;font-size:12.5px;color:#444;"><svg width="6.95" height="8.95" viewBox="0 0 556 716" style="vertical-align:baseline;display:inline-block" preserveAspectRatio="none"><path d="M300 0 H386 V716 H300 V130 C260 170 210 200 150 222 V140 C220 110 270 60 300 0 Z" fill="#444"/></svg>3</div>
<div class="r" style="left:107px;top:307px;width:364px;height:139px;background:#fff;"></div>
<div class="r" style="left:108px;top:308px;width:362px;height:137px;background:#c8c8c8;"></div>
<div class="r" style="left:108px;top:308px;width:97px;height:18px;background:#fff;"></div>
<div class="r" style="left:106px;top:226px;width:1px;height:290px;background:#d9d9d9;"></div>
<div class="r" style="left:205px;top:246px;width:1px;height:40px;background:#d9d9d9;"></div>
<div class="r" style="left:205px;top:308px;width:1px;height:137px;background:#b4b4b4;"></div>
<div class="r" style="left:205px;top:448px;width:1px;height:68px;background:#d9d9d9;"></div>
<div class="r" style="left:292px;top:246px;width:1px;height:40px;background:#d9d9d9;"></div>
<div class="r" style="left:292px;top:308px;width:1px;height:137px;background:#b4b4b4;"></div>
<div class="r" style="left:292px;top:448px;width:1px;height:68px;background:#d9d9d9;"></div>
<div class="r" style="left:379px;top:246px;width:1px;height:40px;background:#d9d9d9;"></div>
<div class="r" style="left:379px;top:308px;width:1px;height:137px;background:#b4b4b4;"></div>
<div class="r" style="left:379px;top:448px;width:1px;height:68px;background:#d9d9d9;"></div>
<div class="r" style="left:471px;top:226px;width:1px;height:290px;background:#d9d9d9;"></div>
<div class="r" style="left:535px;top:226px;width:1px;height:290px;background:#d9d9d9;"></div>
<div class="r" style="left:599px;top:226px;width:1px;height:290px;background:#d9d9d9;"></div>
<div class="r" style="left:663px;top:226px;width:1px;height:290px;background:#d9d9d9;"></div>
<div class="r" style="left:727px;top:226px;width:1px;height:290px;background:#d9d9d9;"></div>
<div class="r" style="left:791px;top:226px;width:1px;height:290px;background:#d9d9d9;"></div>
<div class="r" style="left:855px;top:226px;width:1px;height:290px;background:#d9d9d9;"></div>
<div class="r" style="left:919px;top:226px;width:1px;height:290px;background:#d9d9d9;"></div>
<div class="r" style="left:983px;top:226px;width:1px;height:290px;background:#d9d9d9;"></div>
<div class="r" style="left:1047px;top:226px;width:1px;height:290px;background:#d9d9d9;"></div>
<div class="r" style="left:1111px;top:226px;width:1px;height:290px;background:#d9d9d9;"></div>
<div class="r" style="left:1175px;top:226px;width:1px;height:290px;background:#d9d9d9;"></div>
<div class="r" style="left:1239px;top:226px;width:1px;height:290px;background:#d9d9d9;"></div>
<div class="r" style="left:106px;top:246px;width:1135px;height:1px;background:#d9d9d9;"></div>
<div class="r" style="left:106px;top:286px;width:1135px;height:1px;background:#d9d9d9;"></div>
<div class="r" style="left:25px;top:306px;width:1216px;height:1px;background:#d9d9d9;"></div>
<div class="r" style="left:25px;top:326px;width:81px;height:1px;background:#d9d9d9;"></div>
<div class="r" style="left:108px;top:326px;width:362px;height:1px;background:#b4b4b4;"></div>
<div class="r" style="left:473px;top:326px;width:768px;height:1px;background:#d9d9d9;"></div>
<div class="r" style="left:25px;top:346px;width:81px;height:1px;background:#d9d9d9;"></div>
<div class="r" style="left:108px;top:346px;width:362px;height:1px;background:#b4b4b4;"></div>
<div class="r" style="left:473px;top:346px;width:768px;height:1px;background:#d9d9d9;"></div>
<div class="r" style="left:25px;top:366px;width:81px;height:1px;background:#d9d9d9;"></div>
<div class="r" style="left:108px;top:366px;width:362px;height:1px;background:#b4b4b4;"></div>
<div class="r" style="left:473px;top:366px;width:768px;height:1px;background:#d9d9d9;"></div>
<div class="r" style="left:25px;top:386px;width:81px;height:1px;background:#d9d9d9;"></div>
<div class="r" style="left:108px;top:386px;width:362px;height:1px;background:#b4b4b4;"></div>
<div class="r" style="left:473px;top:386px;width:768px;height:1px;background:#d9d9d9;"></div>
<div class="r" style="left:25px;top:406px;width:81px;height:1px;background:#d9d9d9;"></div>
<div class="r" style="left:108px;top:406px;width:362px;height:1px;background:#b4b4b4;"></div>
<div class="r" style="left:473px;top:406px;width:768px;height:1px;background:#d9d9d9;"></div>
<div class="r" style="left:25px;top:426px;width:81px;height:1px;background:#d9d9d9;"></div>
<div class="r" style="left:108px;top:426px;width:362px;height:1px;background:#b4b4b4;"></div>
<div class="r" style="left:473px;top:426px;width:768px;height:1px;background:#d9d9d9;"></div>
<div class="r" style="left:25px;top:446px;width:1216px;height:1px;background:#d9d9d9;"></div>
<div class="r" style="left:25px;top:466px;width:1216px;height:1px;background:#d9d9d9;"></div>
<div class="r" style="left:25px;top:486px;width:1216px;height:1px;background:#d9d9d9;"></div>
<div class="r" style="left:25px;top:506px;width:1216px;height:1px;background:#d9d9d9;"></div>
<div class="r" style="left:25px;top:526px;width:1216px;height:1px;background:#d9d9d9;"></div>
<div class="r" style="left:105px;top:305px;width:2px;height:143px;background:#1e6c41;"></div>
<div class="r" style="left:471px;top:305px;width:2px;height:143px;background:#1e6c41;"></div>
<div class="r" style="left:105px;top:305px;width:368px;height:2px;background:#1e6c41;"></div>
<div class="r" style="left:105px;top:446px;width:368px;height:2px;background:#1e6c41;"></div>
<div class="r" style="left:468px;top:443px;width:7px;height:7px;background:#fff;"></div>
<div class="r" style="left:469px;top:444px;width:5px;height:5px;background:#1e6c41;"></div>
<div class="t" style="left:30.89px;top:248.87px;font-size:14.8px;font-weight:bold;color:#111;transform-origin:0 0;transform:scaleX(1.0125);">Customer</div>
<div class="t" style="left:40.67px;top:268.17px;font-size:14.8px;font-weight:bold;color:#111;transform-origin:0 0;transform:scaleX(1.0288);">Names</div>
<div class="t" style="left:110.74px;top:259.62px;font-size:14.5px;font-weight:bold;color:#111;transform-origin:0 0;transform:scaleX(1.0069);">Electric Cars</div>
<div class="t" style="left:270.00px;top:229.62px;font-size:14.5px;font-weight:bold;color:#111;transform-origin:0 0;transform:scaleX(0.9973);">Sales</div>
<div class="t" style="left:209.60px;top:259.62px;font-size:14.5px;font-weight:bold;color:#111;transform-origin:0 0;transform:scaleX(1.0572);">Motor cars</div>
<div class="t" style="left:306.66px;top:259.62px;font-size:14.5px;font-weight:bold;color:#111;transform-origin:0 0;transform:scaleX(0.9895);">Bicycles</div>
<div class="t" style="left:383.64px;top:259.62px;font-size:14.5px;font-weight:bold;color:#111;transform-origin:0 0;transform:scaleX(1.0118);">Hybrid Cars</div>
<div class="t" style="left:233.62px;top:289.72px;font-size:14.5px;font-weight:bold;color:#111;transform-origin:0 0;transform:scaleX(1.0372);">USD in millions</div>
<div class="t" style="left:28.85px;top:308.88px;font-size:15.6px;font-weight:normal;color:#262626;transform-origin:0 0;transform:scaleX(0.9172);">Emily</div>
<div class="t" style="left:102.30px;width:100px;text-align:right;top:308.88px;font-size:15.6px;color:#262626;transform-origin:100% 0;transform:scaleX(0.998);"><svg width="8.67" height="11.17" viewBox="0 0 556 716" style="vertical-align:baseline;display:inline-block" preserveAspectRatio="none"><path d="M300 0 H386 V716 H300 V130 C260 170 210 200 150 222 V140 C220 110 270 60 300 0 Z" fill="#262626"/></svg>3</div>
<div class="t" style="left:189.30px;width:100px;text-align:right;top:308.88px;font-size:15.6px;color:#262626;transform-origin:100% 0;transform:scaleX(0.998);">22</div>
<div class="t" style="left:276.30px;width:100px;text-align:right;top:308.88px;font-size:15.6px;color:#262626;transform-origin:100% 0;transform:scaleX(0.998);">34</div>
<div class="t" style="left:368.30px;width:100px;text-align:right;top:308.88px;font-size:15.6px;color:#262626;transform-origin:100% 0;transform:scaleX(0.998);">2<svg width="8.67" height="11.17" viewBox="0 0 556 716" style="vertical-align:baseline;display:inline-block" preserveAspectRatio="none"><path d="M300 0 H386 V716 H300 V130 C260 170 210 200 150 222 V140 C220 110 270 60 300 0 Z" fill="#262626"/></svg></div>
<div class="t" style="left:29.76px;top:328.88px;font-size:15.6px;font-weight:normal;color:#262626;transform-origin:0 0;transform:scaleX(0.9600);">James</div>
<div class="t" style="left:102.30px;width:100px;text-align:right;top:328.88px;font-size:15.6px;color:#262626;transform-origin:100% 0;transform:scaleX(0.998);"><svg width="8.67" height="11.17" viewBox="0 0 556 716" style="vertical-align:baseline;display:inline-block" preserveAspectRatio="none"><path d="M300 0 H386 V716 H300 V130 C260 170 210 200 150 222 V140 C220 110 270 60 300 0 Z" fill="#262626"/></svg>5</div>
<div class="t" style="left:189.30px;width:100px;text-align:right;top:328.88px;font-size:15.6px;color:#262626;transform-origin:100% 0;transform:scaleX(0.998);"><svg width="8.67" height="11.17" viewBox="0 0 556 716" style="vertical-align:baseline;display:inline-block" preserveAspectRatio="none"><path d="M300 0 H386 V716 H300 V130 C260 170 210 200 150 222 V140 C220 110 270 60 300 0 Z" fill="#262626"/></svg>9</div>
<div class="t" style="left:276.30px;width:100px;text-align:right;top:328.88px;font-size:15.6px;color:#262626;transform-origin:100% 0;transform:scaleX(0.998);">50</div>
<div class="t" style="left:368.30px;width:100px;text-align:right;top:328.88px;font-size:15.6px;color:#262626;transform-origin:100% 0;transform:scaleX(0.998);">45</div>
<div class="t" style="left:29.95px;top:348.88px;font-size:15.6px;font-weight:normal;color:#262626;transform-origin:0 0;transform:scaleX(0.9624);">William</div>
<div class="t" style="left:102.30px;width:100px;text-align:right;top:348.88px;font-size:15.6px;color:#262626;transform-origin:100% 0;transform:scaleX(0.998);"><svg width="8.67" height="11.17" viewBox="0 0 556 716" style="vertical-align:baseline;display:inline-block" preserveAspectRatio="none"><path d="M300 0 H386 V716 H300 V130 C260 170 210 200 150 222 V140 C220 110 270 60 300 0 Z" fill="#262626"/></svg>4</div>
<div class="t" style="left:189.30px;width:100px;text-align:right;top:348.88px;font-size:15.6px;color:#262626;transform-origin:100% 0;transform:scaleX(0.998);">29</div>
<div class="t" style="left:276.30px;width:100px;text-align:right;top:348.88px;font-size:15.6px;color:#262626;transform-origin:100% 0;transform:scaleX(0.998);"><svg width="8.67" height="11.17" viewBox="0 0 556 716" style="vertical-align:baseline;display:inline-block" preserveAspectRatio="none"><path d="M300 0 H386 V716 H300 V130 C260 170 210 200 150 222 V140 C220 110 270 60 300 0 Z" fill="#262626"/></svg><svg width="8.67" height="11.17" viewBox="0 0 556 716" style="vertical-align:baseline;display:inline-block" preserveAspectRatio="none"><path d="M300 0 H386 V716 H300 V130 C260 170 210 200 150 222 V140 C220 110 270 60 300 0 Z" fill="#262626"/></svg></div>
<div class="t" style="left:368.30px;width:100px;text-align:right;top:348.88px;font-size:15.6px;color:#262626;transform-origin:100% 0;transform:scaleX(0.998);">48</div>
<div class="t" style="left:28.82px;top:368.88px;font-size:15.6px;font-weight:normal;color:#262626;transform-origin:0 0;transform:scaleX(0.9407);">Robert</div>
<div class="t" style="left:102.30px;width:100px;text-align:right;top:368.88px;font-size:15.6px;color:#262626;transform-origin:100% 0;transform:scaleX(0.998);">29</div>
<div class="t" style="left:189.30px;width:100px;text-align:right;top:368.88px;font-size:15.6px;color:#262626;transform-origin:100% 0;transform:scaleX(0.998);">3<svg width="8.67" height="11.17" viewBox="0 0 556 716" style="vertical-align:baseline;display:inline-block" preserveAspectRatio="none"><path d="M300 0 H386 V716 H300 V130 C260 170 210 200 150 222 V140 C220 110 270 60 300 0 Z" fill="#262626"/></svg></div>
<div class="t" style="left:276.30px;width:100px;text-align:right;top:368.88px;font-size:15.6px;color:#262626;transform-origin:100% 0;transform:scaleX(0.998);">23</div>
<div class="t" style="left:368.30px;width:100px;text-align:right;top:368.88px;font-size:15.6px;color:#262626;transform-origin:100% 0;transform:scaleX(0.998);">50</div>
<div class="t" style="left:28.81px;top:388.88px;font-size:15.6px;font-weight:normal;color:#262626;transform-origin:0 0;transform:scaleX(0.9513);">Hannah</div>
<div class="t" style="left:102.30px;width:100px;text-align:right;top:388.88px;font-size:15.6px;color:#262626;transform-origin:100% 0;transform:scaleX(0.998);">27</div>
<div class="t" style="left:189.30px;width:100px;text-align:right;top:388.88px;font-size:15.6px;color:#262626;transform-origin:100% 0;transform:scaleX(0.998);">23</div>
<div class="t" style="left:276.30px;width:100px;text-align:right;top:388.88px;font-size:15.6px;color:#262626;transform-origin:100% 0;transform:scaleX(0.998);"><svg width="8.67" height="11.17" viewBox="0 0 556 716" style="vertical-align:baseline;display:inline-block" preserveAspectRatio="none"><path d="M300 0 H386 V716 H300 V130 C260 170 210 200 150 222 V140 C220 110 270 60 300 0 Z" fill="#262626"/></svg>7</div>
<div class="t" style="left:368.30px;width:100px;text-align:right;top:388.88px;font-size:15.6px;color:#262626;transform-origin:100% 0;transform:scaleX(0.998);">23</div>
<div class="t" style="left:29.95px;top:408.88px;font-size:15.6px;font-weight:normal;color:#262626;transform-origin:0 0;transform:scaleX(0.9494);">Archie</div>
<div class="t" style="left:102.30px;width:100px;text-align:right;top:408.88px;font-size:15.6px;color:#262626;transform-origin:100% 0;transform:scaleX(0.998);">26</div>
<div class="t" style="left:189.30px;width:100px;text-align:right;top:408.88px;font-size:15.6px;color:#262626;transform-origin:100% 0;transform:scaleX(0.998);">32</div>
<div class="t" style="left:276.30px;width:100px;text-align:right;top:408.88px;font-size:15.6px;color:#262626;transform-origin:100% 0;transform:scaleX(0.998);">33</div>
<div class="t" style="left:368.30px;width:100px;text-align:right;top:408.88px;font-size:15.6px;color:#262626;transform-origin:100% 0;transform:scaleX(0.998);"><svg width="8.67" height="11.17" viewBox="0 0 556 716" style="vertical-align:baseline;display:inline-block" preserveAspectRatio="none"><path d="M300 0 H386 V716 H300 V130 C260 170 210 200 150 222 V140 C220 110 270 60 300 0 Z" fill="#262626"/></svg>8</div>
<div class="t" style="left:29.36px;top:428.88px;font-size:15.6px;font-weight:normal;color:#262626;transform-origin:0 0;transform:scaleX(0.9163);">Savanna</div>
<div class="t" style="left:102.30px;width:100px;text-align:right;top:428.88px;font-size:15.6px;color:#262626;transform-origin:100% 0;transform:scaleX(0.998);">27</div>
<div class="t" style="left:189.30px;width:100px;text-align:right;top:428.88px;font-size:15.6px;color:#262626;transform-origin:100% 0;transform:scaleX(0.998);">49</div>
<div class="t" style="left:276.30px;width:100px;text-align:right;top:428.88px;font-size:15.6px;color:#262626;transform-origin:100% 0;transform:scaleX(0.998);"><svg width="8.67" height="11.17" viewBox="0 0 556 716" style="vertical-align:baseline;display:inline-block" preserveAspectRatio="none"><path d="M300 0 H386 V716 H300 V130 C260 170 210 200 150 222 V140 C220 110 270 60 300 0 Z" fill="#262626"/></svg>6</div>
<div class="t" style="left:368.30px;width:100px;text-align:right;top:428.88px;font-size:15.6px;color:#262626;transform-origin:100% 0;transform:scaleX(0.998);">34</div>
<div class="r" style="left:805px;top:142px;width:182px;height:298px;background:#fff;border:1px solid #d4d4d4;box-sizing:border-box;box-shadow:1px 2px 6px rgba(0,0,0,0.13);"></div>
<div class="r" style="left:809px;top:142px;width:177px;height:44px;background:#c6c6c6;"></div>
<svg class="s" style="left:815px;top:153.3px;" width="32" height="28" viewBox="0 0 32 28"><rect x="0.6" y="0.6" width="26.6" height="19.7" fill="#fff"/><rect x="7.1" y="7.1" width="13.299999999999999" height="7.1" fill="#fbd38a" stroke="#e9a43a" stroke-width="1"/><path d="M0.6 7.1 H27.2 M0.6 14.2 H27.2 M7.1 0.6 V20.3 M20.4 0.6 V20.3" stroke="#3a3a3a" stroke-width="1" /><rect x="0.6" y="0.6" width="26.6" height="19.7" fill="none" stroke="#333" stroke-width="1.2"/><rect x="11.9" y="13.7" width="17.2" height="11.6" fill="#fff" stroke="#333" stroke-width="1.2"/><path d="M23.6 15.8 L17.6 18.2 L23.6 20.6" fill="none" stroke="#333" stroke-width="1.1"/><path d="M17.6 22.6 H23.6" stroke="#333" stroke-width="1.1"/></svg>
<div class="t" style="left:851.57px;top:160.64px;font-size:12.4px;font-weight:bold;color:#444;transform-origin:0 0;transform:scaleX(0.9128);"><u>H</u>ighlight Cells Rules</div>
<svg class="s" style="left:815px;top:197.1px;" width="32" height="28" viewBox="0 0 32 28"><rect x="0.6" y="0.6" width="26.6" height="19.7" fill="#fff"/><path d="M0.6 7.1 H27.2 M0.6 14.2 H27.2 M7.1 0.6 V20.3 M20.4 0.6 V20.3" stroke="#3a3a3a" stroke-width="1" /><rect x="0.6" y="0.6" width="26.6" height="19.7" fill="none" stroke="#333" stroke-width="1.2"/><rect x="7.1" y="0.6" width="13.299999999999999" height="19.7" fill="#fbd38a" stroke="#e9a43a" stroke-width="1"/><path d="M0.6 0.6 H27.2 M0.6 20.3 H27.2" stroke="#333" stroke-width="1.2"/><rect x="11.9" y="13.7" width="17.8" height="13.6" fill="#fff" stroke="#333" stroke-width="1.2"/><path d="M13.7 12.5 V2.5 M10.3 5.9 L13.7 2.5 L17.1 5.9" fill="none" stroke="#333" stroke-width="1.2"/><path d="M16.6 16.2 V24.4 M16.6 16.3 L14.7 17.8" fill="none" stroke="#555" stroke-width="1.1"/><ellipse cx="22.8" cy="20.3" rx="2.7" ry="4.1" fill="none" stroke="#555" stroke-width="1.1"/></svg>
<div class="t" style="left:852.15px;top:204.64px;font-size:12.4px;font-weight:bold;color:#444;transform-origin:0 0;transform:scaleX(0.9667);"><u>T</u>op/Bottom Rules</div>
<div class="r" style="left:851px;top:230px;width:134px;height:1px;background:#e1e1e1;"></div>
<svg class="s" style="left:815px;top:243px;" width="32" height="26" viewBox="0 0 32 26"><rect x="0.6" y="0.6" width="26.8" height="20.8" fill="#fff"/><rect x="5" y="0.6" width="9" height="7" fill="#6aaee6" stroke="#2e8fd8" stroke-width="0.8"/><rect x="5" y="7" width="3.5" height="7" fill="#6aaee6" stroke="#2e8fd8" stroke-width="0.8"/><rect x="5" y="14" width="6.5" height="7" fill="#6aaee6" stroke="#2e8fd8" stroke-width="0.8"/><rect x="0.6" y="0.6" width="26.8" height="20.8" fill="none" stroke="#333" stroke-width="1.2"/><path d="M0.6 7 H27.4 M0.6 14 H27.4 M5 0.6 V21.4 M22.5 0.6 V21.4" stroke="#333" stroke-width="1"/></svg>
<div class="t" style="left:851.55px;top:250.84px;font-size:12.4px;font-weight:bold;color:#444;transform-origin:0 0;transform:scaleX(0.9364);"><u>D</u>ata Bars</div>
<svg class="s" style="left:815px;top:287px;" width="32" height="26" viewBox="0 0 32 26"><rect x="0.6" y="0.6" width="26.8" height="20.8" fill="#fff"/><rect x="5" y="0.6" width="17.5" height="7" fill="#6aaee6"/><rect x="5" y="7" width="17.5" height="7" fill="#f8d58a"/><rect x="5" y="14" width="17.5" height="7" fill="#f68d99"/><rect x="0.6" y="0.6" width="26.8" height="20.8" fill="none" stroke="#333" stroke-width="1.2"/><path d="M0.6 7 H27.4 M0.6 14 H27.4 M5 0.6 V21.4 M22.5 0.6 V21.4" stroke="#333" stroke-width="1"/></svg>
<div class="t" style="left:851.86px;top:294.64px;font-size:12.4px;font-weight:bold;color:#444;transform-origin:0 0;transform:scaleX(0.8839);">Color <u>S</u>cales</div>
<svg class="s" style="left:815px;top:331px;" width="32" height="26" viewBox="0 0 32 26"><rect x="0.6" y="0.6" width="26.8" height="20.8" fill="#fff"/><rect x="0.6" y="0.6" width="26.8" height="20.8" fill="none" stroke="#333" stroke-width="1.2"/><path d="M0.6 7 H27.4 M0.6 14 H27.4 M5 0.6 V21.4 M22.5 0.6 V21.4 M12.5 0.6 V21.4" stroke="#333" stroke-width="0.9"/><circle cx="8.6" cy="3.8" r="1.5" fill="#2e8fd8"/><circle cx="8.6" cy="10.5" r="1.5" fill="#d9363e"/><circle cx="8.6" cy="17.5" r="1.5" fill="#2e8fd8"/><path d="M16 3.8 H21 M16 10.5 H21 M16 17.5 H21" stroke="#333" stroke-width="1"/></svg>
<div class="t" style="left:851.55px;top:338.54px;font-size:12.4px;font-weight:bold;color:#444;transform-origin:0 0;transform:scaleX(0.9415);"><u>I</u>con Sets</div>
<div class="r" style="left:806px;top:364px;width:179px;height:1px;background:#e1e1e1;"></div>
<svg class="s" style="left:811px;top:371.5px;" width="18" height="16" viewBox="0 0 18 16"><rect x="0.6" y="0.6" width="14.8" height="12.8" fill="#fff"/><rect x="4.5" y="4.5" width="7" height="5" fill="#f8cf7f"/><rect x="0.6" y="4.5" width="14.8" height="5" fill="#fbe3b3"/><rect x="4.5" y="0.6" width="7" height="12.8" fill="#fbe3b3"/><rect x="4.5" y="4.5" width="7" height="5" fill="#f5c165"/><rect x="0.6" y="0.6" width="14.8" height="12.8" fill="none" stroke="#333" stroke-width="1.1"/><path d="M0.6 4.5 H15.4 M0.6 9.5 H15.4 M4.5 0.6 V13.4 M11.5 0.6 V13.4" stroke="#333" stroke-width="0.8"/></svg>
<div class="t" style="left:837.95px;top:371.54px;font-size:12.4px;font-weight:normal;color:#505050;transform-origin:0 0;transform:scaleX(0.9524);"><u>N</u>ew Rule...</div>
<svg class="s" style="left:811px;top:395px;" width="18" height="16" viewBox="0 0 18 16"><rect x="0.6" y="0.6" width="14.8" height="12.8" fill="#fff"/><rect x="0.6" y="0.6" width="11" height="9" fill="#fbe3b3"/><rect x="0.6" y="0.6" width="14.8" height="12.8" fill="none" stroke="#333" stroke-width="1.1"/><path d="M0.6 4.5 H15.4 M0.6 9.5 H8 M4.5 0.6 V13.4 M11.5 0.6 V6" stroke="#333" stroke-width="0.8"/><path d="M6.5 11.5 L12 6 L16 10 L10.5 15.5 Z" fill="#fff" stroke="#9b4fc8" stroke-width="1.2"/><path d="M6.5 11.5 L8.8 9.2 L12.8 13.2 L10.5 15.5 Z" fill="#b57ad6" stroke="#9b4fc8" stroke-width="1.1"/></svg>
<div class="t" style="left:838.36px;top:396.14px;font-size:12.4px;font-weight:normal;color:#505050;transform-origin:0 0;transform:scaleX(0.9035);"><u>C</u>lear Rules</div>
<svg class="s" style="left:810px;top:418px;" width="18" height="16" viewBox="0 0 18 16"><path d="M0.6 14 V0.6 H13.5" fill="none" stroke="#333" stroke-width="0.9"/><path d="M2.5 14 V2.5 H13.5" fill="none" stroke="#333" stroke-width="0.9"/><rect x="3.6" y="3.6" width="12.8" height="11" fill="#fff" stroke="#333" stroke-width="1.1"/><rect x="7" y="6.6" width="6" height="5" fill="#f5c165"/><path d="M3.6 7 H16.4 M3.6 11 H16.4 M7.5 3.6 V14.6 M12.5 3.6 V14.6" stroke="#333" stroke-width="0.8"/></svg>
<div class="t" style="left:837.96px;top:420.34px;font-size:12.4px;font-weight:normal;color:#505050;transform-origin:0 0;transform:scaleX(0.9427);">Manage <u>R</u>ules...</div>
<svg class="s" style="left:974px;top:160.29999999999998px;" width="6" height="8" viewBox="0 0 6 8"><path d="M0.3 0 L4.8 4 L0.3 8 Z" fill="#6a6a6a"/></svg>
<svg class="s" style="left:974px;top:204.29999999999998px;" width="6" height="8" viewBox="0 0 6 8"><path d="M0.3 0 L4.8 4 L0.3 8 Z" fill="#6a6a6a"/></svg>
<svg class="s" style="left:974px;top:250.49999999999997px;" width="6" height="8" viewBox="0 0 6 8"><path d="M0.3 0 L4.8 4 L0.3 8 Z" fill="#6a6a6a"/></svg>
<svg class="s" style="left:974px;top:294.3px;" width="6" height="8" viewBox="0 0 6 8"><path d="M0.3 0 L4.8 4 L0.3 8 Z" fill="#6a6a6a"/></svg>
<svg class="s" style="left:974px;top:338.20000000000005px;" width="6" height="8" viewBox="0 0 6 8"><path d="M0.3 0 L4.8 4 L0.3 8 Z" fill="#6a6a6a"/></svg>
<svg class="s" style="left:974px;top:395.0px;" width="6" height="8" viewBox="0 0 6 8"><path d="M0.3 0 L4.8 4 L0.3 8 Z" fill="#6a6a6a"/></svg>
<div class="r" style="left:987px;top:142px;width:183px;height:338px;background:#fff;border:1px solid #d4d4d4;box-sizing:border-box;box-shadow:1px 2px 6px rgba(0,0,0,0.13);"></div>
<svg class="s" style="left:997.2px;top:155.5px;" width="32" height="28" viewBox="0 0 32 28"><rect x="0.6" y="0.6" width="26.6" height="19.7" fill="#fff"/><rect x="7.1" y="7.1" width="13.299999999999999" height="7.1" fill="#fbd38a" stroke="#e9a43a" stroke-width="1"/><path d="M0.6 7.1 H27.2 M0.6 14.2 H27.2 M7.1 0.6 V20.3 M20.4 0.6 V20.3" stroke="#3a3a3a" stroke-width="1" /><rect x="0.6" y="0.6" width="26.6" height="19.7" fill="none" stroke="#333" stroke-width="1.2"/><rect x="11.9" y="13.7" width="17.2" height="11.6" fill="#fff" stroke="#333" stroke-width="1.2"/><path d="M17.6 16.3 L24.2 19.5 L17.6 22.7" fill="none" stroke="#333" stroke-width="1.1"/></svg>
<div class="t" style="left:1034.02px;top:162.84px;font-size:12.4px;font-weight:bold;color:#444;transform-origin:0 0;transform:scaleX(0.9553);"><u>G</u>reater Than...</div>
<svg class="s" style="left:997.2px;top:199.5px;" width="32" height="28" viewBox="0 0 32 28"><rect x="0.6" y="0.6" width="26.6" height="19.7" fill="#fff"/><rect x="7.1" y="7.1" width="13.299999999999999" height="7.1" fill="#fbd38a" stroke="#e9a43a" stroke-width="1"/><path d="M0.6 7.1 H27.2 M0.6 14.2 H27.2 M7.1 0.6 V20.3 M20.4 0.6 V20.3" stroke="#3a3a3a" stroke-width="1" /><rect x="0.6" y="0.6" width="26.6" height="19.7" fill="none" stroke="#333" stroke-width="1.2"/><rect x="11.9" y="13.7" width="17.2" height="11.6" fill="#fff" stroke="#333" stroke-width="1.2"/><path d="M24.2 16.3 L17.6 19.5 L24.2 22.7" fill="none" stroke="#333" stroke-width="1.1"/></svg>
<div class="t" style="left:1033.79px;top:207.64px;font-size:12.4px;font-weight:bold;color:#444;transform-origin:0 0;transform:scaleX(0.8829);"><u>L</u>ess Than...</div>
<svg class="s" style="left:997.2px;top:243.5px;" width="32" height="28" viewBox="0 0 32 28"><rect x="0.6" y="0.6" width="26.6" height="19.7" fill="#fff"/><rect x="0.6" y="0.6" width="6.5" height="6.5" fill="#7fbbe8"/><rect x="20.4" y="0.6" width="6.800000000000001" height="6.5" fill="#7fbbe8"/><rect x="7.1" y="7.1" width="13.299999999999999" height="7.1" fill="#fbd38a" stroke="#e9a43a" stroke-width="1"/><path d="M0.6 7.1 H27.2 M0.6 14.2 H27.2 M7.1 0.6 V20.3 M20.4 0.6 V20.3" stroke="#3a3a3a" stroke-width="1" /><rect x="0.6" y="0.6" width="26.6" height="19.7" fill="none" stroke="#333" stroke-width="1.2"/></svg>
<div class="t" style="left:1033.71px;top:251.14px;font-size:12.4px;font-weight:bold;color:#444;transform-origin:0 0;transform:scaleX(0.9933);"><u>B</u>etween...</div>
<svg class="s" style="left:997.2px;top:287.5px;" width="32" height="28" viewBox="0 0 32 28"><rect x="0.6" y="0.6" width="26.6" height="19.7" fill="#fff"/><rect x="7.1" y="7.1" width="13.299999999999999" height="7.1" fill="#fbd38a" stroke="#e9a43a" stroke-width="1"/><path d="M0.6 7.1 H27.2 M0.6 14.2 H27.2 M7.1 0.6 V20.3 M20.4 0.6 V20.3" stroke="#3a3a3a" stroke-width="1" /><rect x="0.6" y="0.6" width="26.6" height="19.7" fill="none" stroke="#333" stroke-width="1.2"/><rect x="11.9" y="13.7" width="17.2" height="11.6" fill="#fff" stroke="#333" stroke-width="1.2"/><path d="M17.5 18 H24.3 M17.5 21.3 H24.3" stroke="#333" stroke-width="1.1"/></svg>
<div class="t" style="left:1033.77px;top:295.34px;font-size:12.4px;font-weight:bold;color:#444;transform-origin:0 0;transform:scaleX(0.9094);"><u>E</u>qual To...</div>
<svg class="s" style="left:997.2px;top:331.5px;" width="32" height="28" viewBox="0 0 32 28"><rect x="0.6" y="0.6" width="26.6" height="19.7" fill="#fff"/><rect x="7.1" y="7.1" width="13.299999999999999" height="7.1" fill="#fbd38a" stroke="#e9a43a" stroke-width="1"/><path d="M0.6 7.1 H27.2 M0.6 14.2 H27.2 M7.1 0.6 V20.3 M20.4 0.6 V20.3" stroke="#3a3a3a" stroke-width="1" /><rect x="0.6" y="0.6" width="26.6" height="19.7" fill="none" stroke="#333" stroke-width="1.2"/><rect x="11.9" y="13.7" width="17.2" height="11.6" fill="#fff" stroke="#333" stroke-width="1.2"/><text x="16.3" y="24" font-size="12.5" font-family="Liberation Sans" fill="#333">a</text></svg>
<div class="t" style="left:1034.36px;top:338.94px;font-size:12.4px;font-weight:bold;color:#444;transform-origin:0 0;transform:scaleX(0.9451);"><u>T</u>ext that Contains...</div>
<svg class="s" style="left:997.2px;top:375.5px;" width="32" height="28" viewBox="0 0 32 28"><rect x="0.6" y="0.6" width="26.6" height="19.7" fill="#fff"/><rect x="7.1" y="7.1" width="13.299999999999999" height="7.1" fill="#fbd38a" stroke="#e9a43a" stroke-width="1"/><path d="M0.6 7.1 H27.2 M0.6 14.2 H27.2 M7.1 0.6 V20.3 M20.4 0.6 V20.3" stroke="#3a3a3a" stroke-width="1" /><rect x="0.6" y="0.6" width="26.6" height="19.7" fill="none" stroke="#333" stroke-width="1.2"/><rect x="15.5" y="13.7" width="14.2" height="11.8" fill="#fff" stroke="#333" stroke-width="1.2"/><path d="M15.5 16.5 H29.7" stroke="#333" stroke-width="1.1"/><path d="M18.3 11 V15 M26.8 11 V15" stroke="#333" stroke-width="1.1"/></svg>
<div class="t" style="left:1034.22px;top:383.64px;font-size:12.4px;font-weight:bold;color:#444;transform-origin:0 0;transform:scaleX(0.9404);"><u>A</u> Date Occurring...</div>
<svg class="s" style="left:997.2px;top:419.3px;" width="32" height="28" viewBox="0 0 32 28"><rect x="0.6" y="0.6" width="26.6" height="19.7" fill="#fff"/><path d="M0.6 7.1 H7.1 M0.6 14.2 H7.1 M20.4 7.1 H27.2 M20.4 14.2 H27.2 M7.1 0.6 V20.3 M20.4 0.6 V20.3" stroke="#3a3a3a" stroke-width="1" /><rect x="7.1" y="0.6" width="13.299999999999999" height="19.7" fill="#fbd38a" stroke="#e9a43a" stroke-width="1"/><path d="M7.1 7.1 H20.4 M7.1 14.2 H20.4" stroke="#e9a43a" stroke-width="1"/><rect x="0.6" y="0.6" width="26.6" height="19.7" fill="none" stroke="#333" stroke-width="1.2"/></svg>
<div class="t" style="left:1033.75px;top:427.04px;font-size:12.4px;font-weight:bold;color:#444;transform-origin:0 0;transform:scaleX(0.9399);"><u>D</u>uplicate Values...</div>
<div class="t" style="left:1020.06px;top:459.84px;font-size:12.4px;font-weight:normal;color:#505050;transform-origin:0 0;transform:scaleX(0.9427);"><u>M</u>ore Rules...</div>
<div class="r" style="left:804px;top:136px;width:188px;height:55px;box-sizing:border-box;border:6px solid #e31b23;border-bottom-width:6px;"></div>
<div class="r" style="left:810px;top:142px;width:69px;height:1px;background:#f6e9ea;"></div>
<div class="r" style="left:796px;top:60px;width:89px;height:89px;box-sizing:border-box;border:6px solid #e31b23;border-bottom-width:6px;"></div>
<div class="r" style="left:984px;top:405px;width:187px;height:50px;box-sizing:border-box;border:6px solid #e31b23;border-bottom-width:6px;"></div>
<svg class="s" style="left:740px;top:130px;" width="50" height="58" viewBox="0 0 50 58"><path d="M56 6.8 H9 Q6.8 6.8 6.8 9 V40 Q6.8 42.2 9 42.2 H30" fill="none" stroke="#e31b23" stroke-width="5.6"/><path d="M25.3 30.8 L46.9 42.3 L25.3 54.4 L31 42.3 Z" fill="#e31b23"/></svg>
<svg class="s" style="left:950px;top:185px;" width="40" height="260" viewBox="0 0 40 260"><path d="M9.8 0 V244.5 Q9.8 246.4 12 246.4 H20" fill="none" stroke="#e31b23" stroke-width="5.6"/><path d="M13.8 235 L28.4 245.3 L13.8 255.5 L18 245.3 Z" fill="#e31b23"/></svg>
</body></html>
